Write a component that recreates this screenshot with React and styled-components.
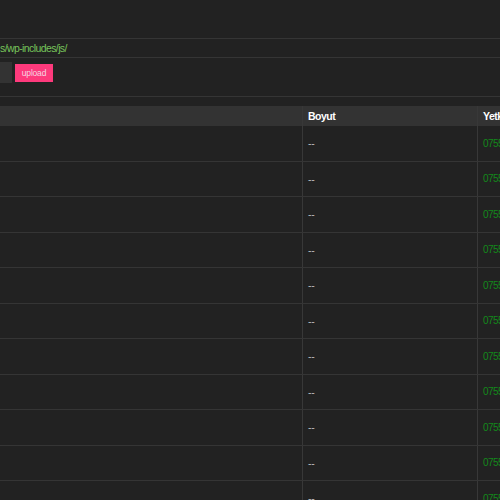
import styled, { createGlobalStyle } from "styled-components";

const GlobalStyle = createGlobalStyle`
	html, body {
		margin: 0;
		padding: 0;
		background-color: #222;
		overflow: hidden;
	}
	body {
		font-family: "Liberation Sans", Arial, sans-serif;
		font-size: 11px;
		color: #ddd;
	}
`;

const Page = styled.div`
	width: 500px;
	display: flex;
	flex-direction: column;
	& > * {
		flex-shrink: 0;
	}
`;

const TopBar = styled.div`
	height: 38px;
	border-bottom: 1px solid #353535;
`;

const PathBar = styled.div`
	height: 18px;
	display: flex;
	align-items: center;
	border-bottom: 1px solid #353535;
	color: #76c45a;
	font-size: 10.5px;
	letter-spacing: -0.6px;
	white-space: nowrap;
`;

const UploadForm = styled.form`
	height: 39px;
	box-sizing: border-box;
	padding-top: 4px;
	display: flex;
	align-items: flex-start;
	gap: 3px;
	border-bottom: 1px solid #353535;
`;

const FileBox = styled.div`
	width: 12px;
	height: 21px;
	background-color: #333;
`;

const UploadButton = styled.button`
	margin-top: 2px;
	width: 38px;
	height: 18px;
	padding: 0;
	border: none;
	background-color: #fe3a7c;
	color: #f5d6e2;
	font-family: inherit;
	font-size: 8.5px;
	letter-spacing: -0.2px;
`;

const Table = styled.div`
	margin-top: 9px;
	display: flex;
	flex-direction: column;
`;

const Row = styled.div`
	display: grid;
	grid-template-columns: 302px 175px 1fr;
	box-sizing: border-box;
	height: ${(p) => (p.$head ? "20px" : "35.5px")};
	background-color: ${(p) => (p.$head ? "#333" : "transparent")};
	border-bottom: ${(p) => (p.$head ? "none" : "1px solid #353535")};
`;

const Cell = styled.div`
	display: flex;
	align-items: center;
	padding-left: 5px;
	white-space: nowrap;
	overflow: hidden;
	border-left: ${(p) => (p.$first ? "none" : "1px solid #383838")};
	font-weight: ${(p) => (p.$head ? "bold" : "normal")};
	color: ${(p) => (p.$head ? "#fff" : p.$perm ? "#13891b" : "#bbb")};
	font-size: ${(p) => (p.$perm ? "10px" : "10.5px")};
	letter-spacing: ${(p) => (p.$perm ? "-0.6px" : p.$head ? "-0.5px" : "-0.3px")};
`;

const rows = Array.from({ length: 11 }, () => ({ size: "--", perm: "0755" }));

export default function App() {
	return (
		<>
			<GlobalStyle />
			<Page>
				<TopBar />
				<PathBar>s/wp-includes/js/</PathBar>
				<UploadForm>
					<FileBox />
					<UploadButton type="button">upload</UploadButton>
				</UploadForm>
				<Table>
					<Row $head>
						<Cell $first $head />
						<Cell $head>Boyut</Cell>
						<Cell $head>Yetki</Cell>
					</Row>
					{rows.map((r, i) => (
						<Row key={i}>
							<Cell $first />
							<Cell>{r.size}</Cell>
							<Cell $perm>{r.perm}</Cell>
						</Row>
					))}
				</Table>
			</Page>
		</>
	);
}
